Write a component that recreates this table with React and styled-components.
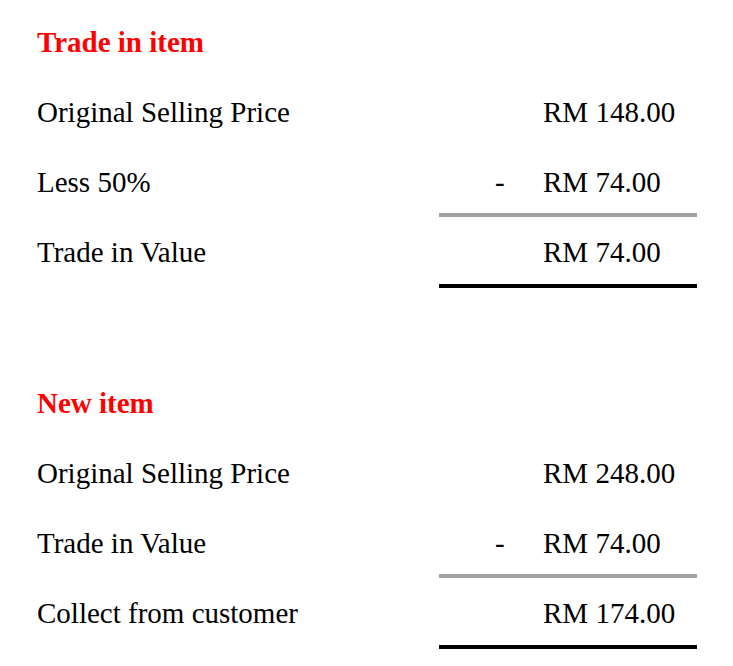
import React from "react";
import styled, { createGlobalStyle } from "styled-components";

const GlobalStyle = createGlobalStyle`
  body {
    margin: 0;
    background: #fff;
    font-family: "Liberation Serif", "Times New Roman", serif;
    color: #000;
  }
`;

const sections = [
  {
    title: "Trade in item",
    rows: [
      { label: "Original Selling Price", amount: "RM 148.00" },
      { label: "Less 50%", amount: "RM 74.00", minus: true, line: "sub" },
      { label: "Trade in Value", amount: "RM 74.00", line: "total" },
    ],
  },
  {
    title: "New item",
    rows: [
      { label: "Original Selling Price", amount: "RM 248.00" },
      { label: "Trade in Value", amount: "RM 74.00", minus: true, line: "sub" },
      { label: "Collect from customer", amount: "RM 174.00", line: "total" },
    ],
  },
];

const App = () => {
  return (
    <Page>
      <GlobalStyle />
      {sections.map((s) => (
        <Section key={s.title}>
          <Title>{s.title}</Title>
          {s.rows.map((r, i) => (
            <Row key={i}>
              <Label>{r.label}</Label>
              <Value line={r.line}>
                <Minus>{r.minus ? "-" : ""}</Minus>
                <Amount>{r.amount}</Amount>
              </Value>
            </Row>
          ))}
        </Section>
      ))}
    </Page>
  );
};

const Page = styled.div`
  padding: 7px 0 0 37px;
  display: flex;
  flex-direction: column;
  gap: 80px;
`;

const Section = styled.div`
  display: flex;
  flex-direction: column;
`;

const Title = styled.h2`
  margin: 0;
  height: 70px;
  line-height: 70px;
  font-size: 29px;
  font-weight: bold;
  color: #ff0000;
`;

const Row = styled.div`
  display: grid;
  grid-template-columns: 402px 258px;
`;

const Label = styled.div`
  font-size: 29px;
  line-height: 34px;
  padding-top: 18px;
`;

const Value = styled.div`
  display: flex;
  font-size: 29px;
  line-height: 34px;
  padding: 18px 0 0 56px;
  height: ${(p) => (p.line === "total" ? "49px" : "48px")};
  border-bottom: 4px solid
    ${(p) =>
      p.line === "sub" ? "#a0a0a0" : p.line === "total" ? "#000" : "transparent"};
`;

const Minus = styled.span`
  width: 48px;
`;

const Amount = styled.span``;

export default App;
